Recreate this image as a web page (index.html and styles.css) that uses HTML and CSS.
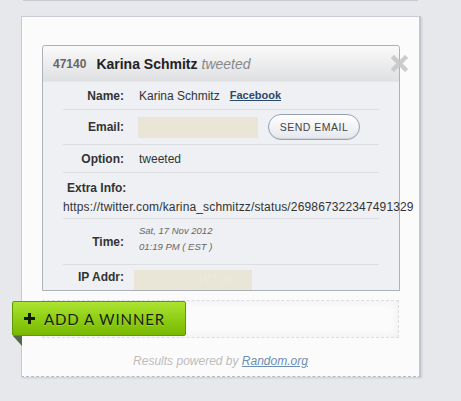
FILE: index.html
```html
<html>
<head>
  <meta charset="UTF-8">
  <title>Winner</title>
  <link rel="stylesheet" href="styles.css">
</head>
<body>

  <div class="topbox"></div>

  <div class="card">

    <div class="panel">
      <div class="panel-head">
        <span class="entry-id">47140</span>
        <span class="entry-name">Karina Schmitz</span>
        <span class="entry-action">tweeted</span>
        <a class="close" aria-label="Close">
          <svg width="17" height="17" viewBox="0 0 17 17">
            <path d="M3 3 L14 14 M14 3 L3 14" stroke="#c8c8c8" stroke-width="4.5" stroke-linecap="square"/>
          </svg>
        </a>
      </div>

      <div class="panel-body">
        <div class="row row-name">
          <span class="label">Name:</span>
          <span class="value">Karina Schmitz</span>
          <a class="fb">Facebook</a>
        </div>
        <div class="row row-email">
          <span class="label">Email:</span>
          <span class="blank"></span>
          <button class="send">SEND EMAIL</button>
        </div>
        <div class="row row-option">
          <span class="label">Option:</span>
          <span class="value">tweeted</span>
        </div>
        <div class="row row-extra">
          <div class="label-left">Extra Info:</div>
          <div class="url">https://twitter.com/karina_schmitzz/status/269867322347491329</div>
        </div>
        <div class="row row-time">
          <span class="label">Time:</span>
          <span class="when">Sat, 17 Nov 2012<br>01:19 PM ( EST )</span>
        </div>
        <div class="row row-ip">
          <span class="label">IP Addr:</span>
          <span class="blank blank-ip">197.29</span>
        </div>
      </div>
    </div>

    <div class="dropzone">
      <button class="add-winner">
        <svg class="plus" width="11" height="11" viewBox="0 0 11 11">
          <path d="M5.5 0 V11 M0 5.5 H11" stroke="#111a02" stroke-width="3"/>
        </svg>ADD A WINNER</button>
    </div>

    <p class="powered">Results powered by <a>Random.org</a></p>
  </div>

</body>
</html>
```

FILE: styles.css
```css
body{
  margin: 0;
  background: #e7e8eb;
  font-family: "Liberation Sans", Arial, sans-serif;
  color: #333;
}

.topbox{
  margin: 0 43px 0 23px;
  height: 0;
  border-bottom: 1px solid #c9ccd3;
}

.card{
  margin: 15px 0 0 21px;
  width: 357px;
  padding: 28px 20px 0 20px;
  height: 331px;
  background: #fbfbfb;
  border: 1px solid #c9ccd3;
  border-right: 2px solid #c2c6ce;
  border-bottom: 1px dashed #b7bac2;
  box-shadow: 1px 1px 2px rgba(0,0,0,0.12);
}

.panel{
  width: 356px;
  border: 1px solid #adb1b8;
  border-radius: 3px 3px 0 0;
  background: #eef0f3;
}

.panel-head{
  position: relative;
  height: 35px;
  display: flex;
  align-items: center;
  padding-left: 10px;
  background: linear-gradient(#fafafa, #dfe0e2);
  border-bottom: 1px solid #e4e6e9;
  border-radius: 3px 3px 0 0;
}
.entry-id{
  font-size: 12px;
  font-weight: bold;
  color: #666;
  margin-right: 10px;
}
.entry-name{
  font-size: 14px;
  font-weight: bold;
  color: #222;
  margin-right: 4px;
}
.entry-action{
  font-size: 14px;
  font-style: italic;
  color: #888;
}
.close{
  position: absolute;
  right: -9px;
  top: 9px;
  cursor: pointer;
  opacity: 0.9;
}

.panel-body{
  height: 208px;
  overflow-x: visible;
  overflow-y: clip;
}

.row{
  margin: 0 20px;
  display: flex;
  align-items: center;
  border-bottom: 1px solid #dcdee2;
  font-size: 12px;
}
.row-name{ height: 26px; padding-top: 1px; }
.row-email{ height: 34px; }
.row-option{ height: 26px; padding-top: 1px; }
.row-extra{
  height: 45px;
  display: block;
}
.row-time{ height: 45px; }
.row-ip{ height: 30px; border-bottom: none; align-items: flex-start; padding-top: 5px; }

.label{
  width: 61px;
  text-align: right;
  font-weight: bold;
  margin-right: 15px;
  flex-shrink: 0;
}
.row-ip .label{ margin-top: 0; margin-right: 11px; }
.value{ color: #333; }

.fb{
  margin-left: 10px;
  font-size: 11px;
  font-weight: bold;
  color: #2b4a6b;
  text-decoration: underline;
  margin-top: -3px;
  cursor: pointer;
}

.blank{
  width: 120px;
  height: 21px;
  background: #e9e6d7;
  margin-left: -1px;
}
.blank-ip{
  width: 118px;
  height: 28px;
  color: #ece9dd;
  font-size: 12px;
  text-align: right;
  box-sizing: border-box;
  line-height: 21px;
  padding-right: 18px;
}

.send{
  margin-left: 10px;
  width: 92px;
  height: 26px;
  border: 1px solid #98a1b3;
  border-radius: 13px;
  background: linear-gradient(#ffffff, #e4e7ee);
  box-shadow: inset 0 -1px 1px rgba(0,0,0,0.08);
  font-family: "Liberation Sans", Arial, sans-serif;
  font-size: 10.5px;
  letter-spacing: 0.5px;
  color: #444;
  cursor: pointer;
}

.label-left{
  font-weight: bold;
  padding: 8px 0 0 4px;
}
.url{
  margin-top: 5px;
  white-space: nowrap;
  color: #333;
  letter-spacing: 0.15px;
}

.when{
  font-size: 9.5px;
  font-style: italic;
  color: #666;
  line-height: 16px;
  margin-top: -5px;
}

.dropzone{
  position: relative;
  margin-top: 9px;
  height: 36px;
  border: 1px dashed #dcdde0;
  box-shadow: inset 0 0 10px rgba(0,0,0,0.06);
}
.add-winner{
  position: absolute;
  left: -31px;
  top: 0;
  width: 174px;
  height: 35px;
  display: flex;
  align-items: center;
  padding: 0 0 0 11px;
  border: 1px solid #5f9a06;
  border-radius: 2px;
  background: linear-gradient(#ace532, #8ccc12 55%, #78b800);
  font-family: Lato, "Liberation Sans", sans-serif;
  font-size: 15px;
  letter-spacing: 0.9px;
  color: #16220a;
  text-shadow: 0 1px 0 rgba(255,255,255,0.25);
  cursor: pointer;
}
.add-winner::after{
  content: "";
  position: absolute;
  left: 0;
  top: 34px;
  border-style: solid;
  border-width: 10px 0 0 9px;
  border-color: #55684a transparent transparent transparent;
}
.plus{
  margin-right: 9px;
  margin-top: -1px;
}

.powered{
  margin: 16px 0 0 0;
  text-align: center;
  font-size: 12px;
  font-style: italic;
  color: #bdbdbd;
}
.powered a{
  color: #6c8db2;
  text-decoration: underline;
}
```
